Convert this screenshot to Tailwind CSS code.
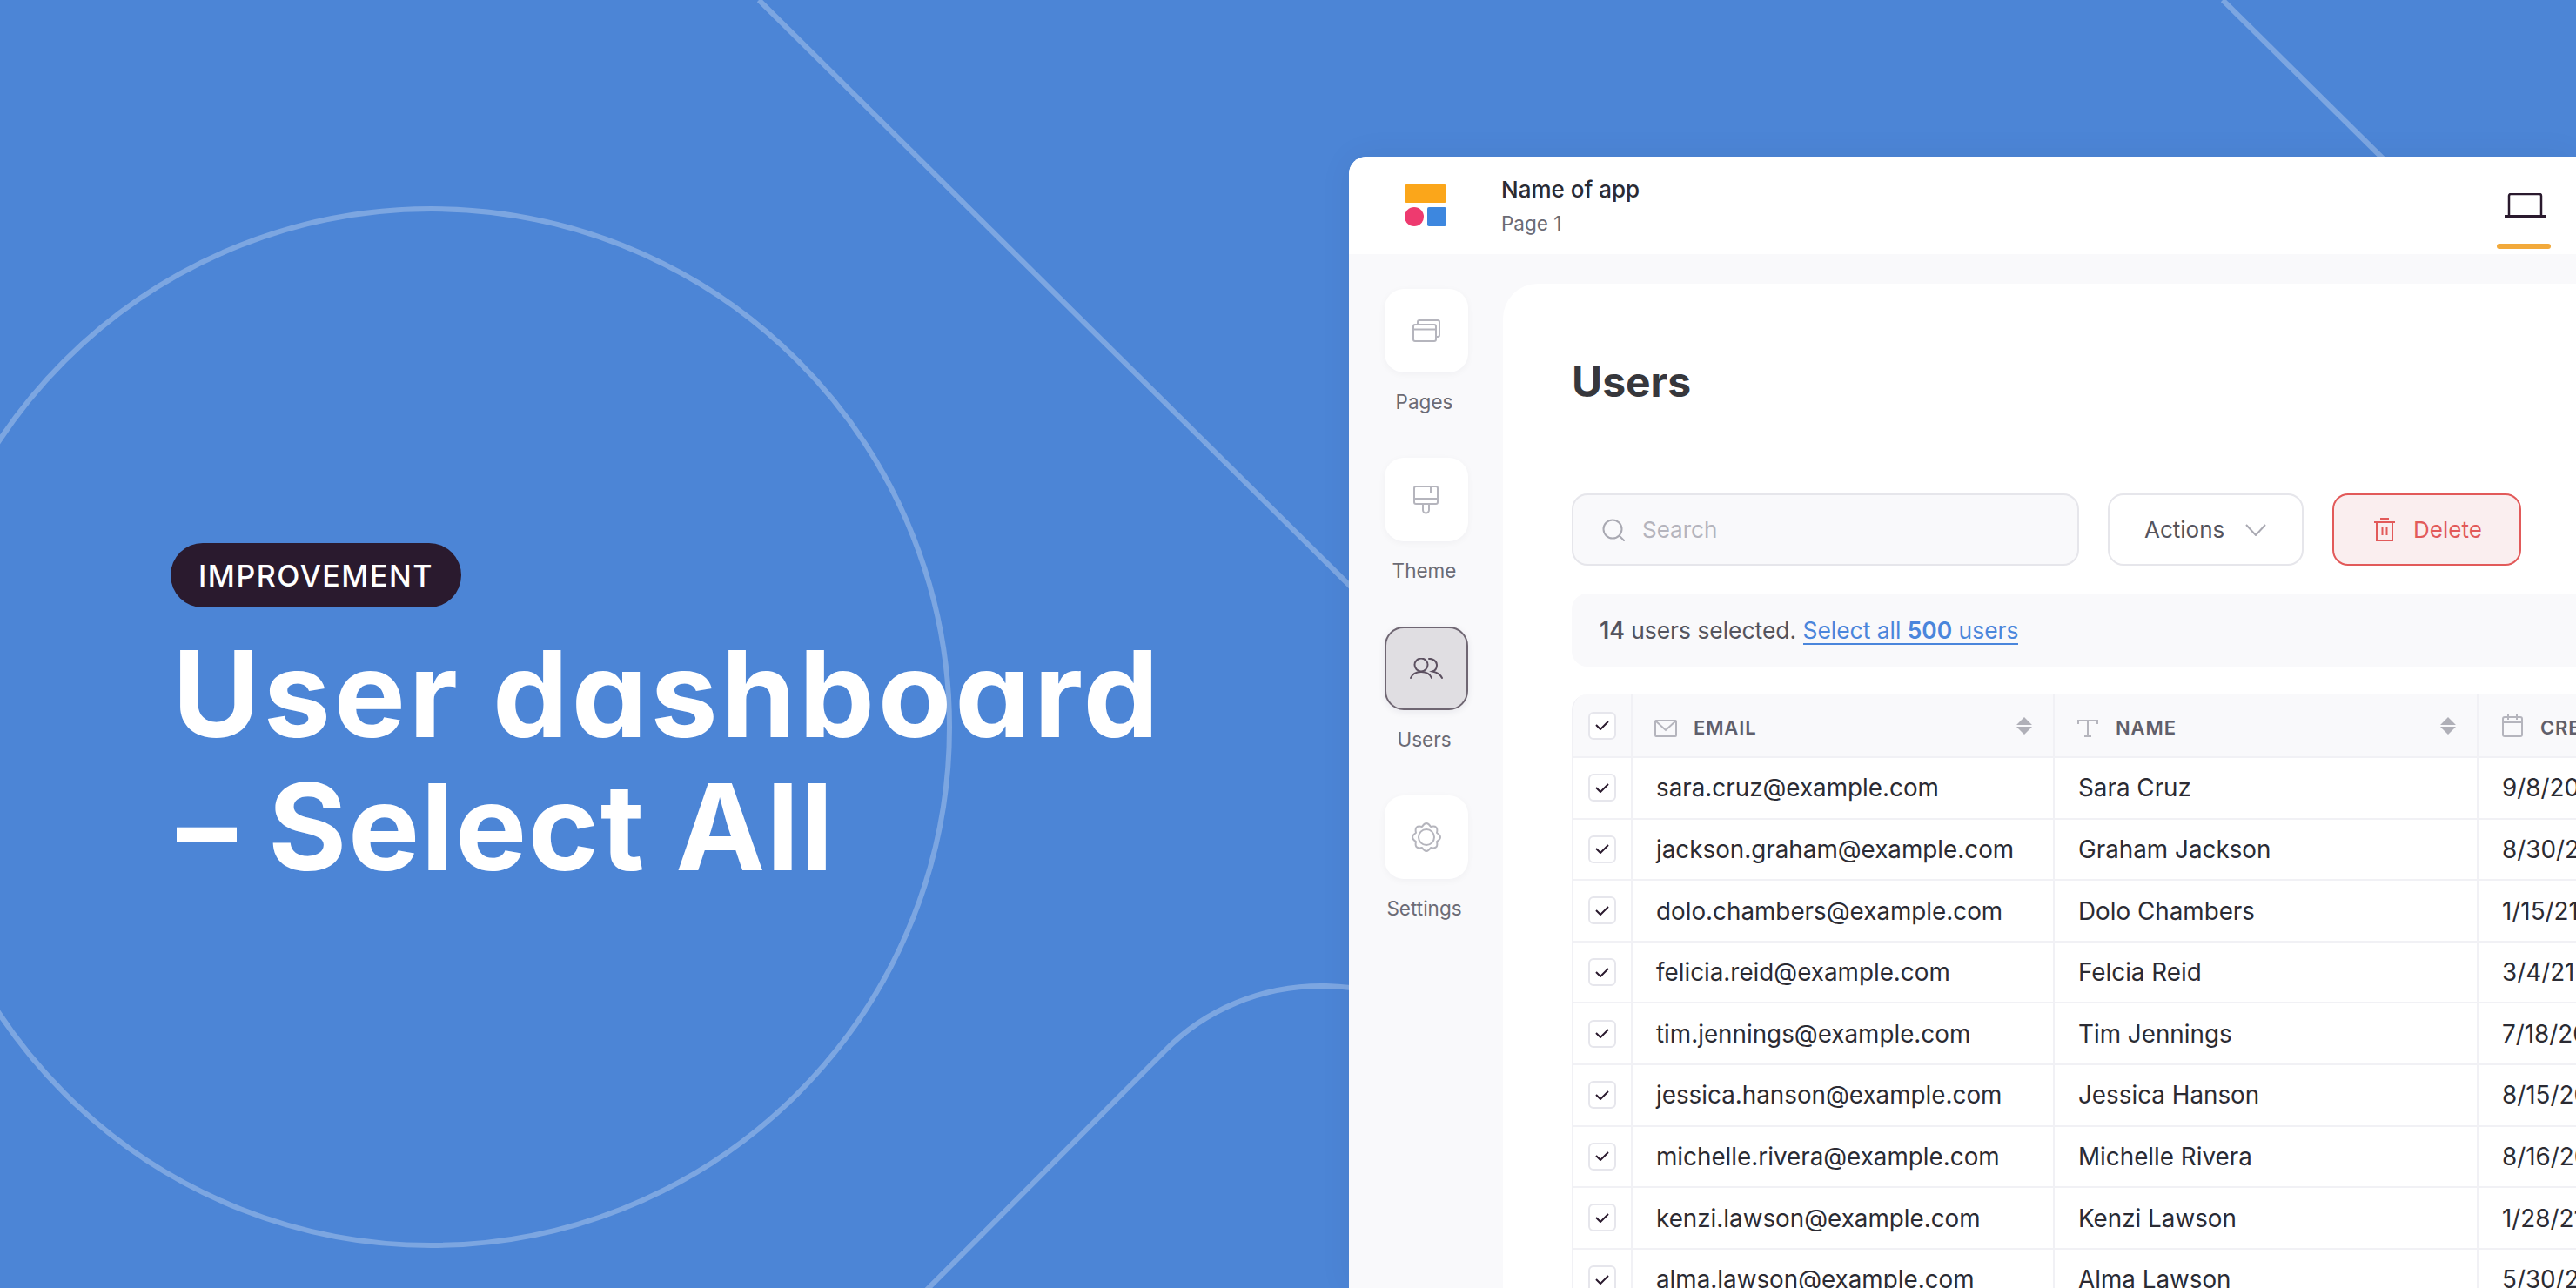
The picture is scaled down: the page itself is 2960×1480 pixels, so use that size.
<!DOCTYPE html>
<html lang="en">
<head>
  <meta charset="UTF-8" />
  <title>User dashboard - Select All</title>
  <script src="https://cdn.jsdelivr.net/npm/@tailwindcss/browser@4"></script>
</head>
<body class="relative flex w-[2960px] h-[1480px] overflow-hidden bg-[#4c85d6] font-['Inter',sans-serif]">

  <!-- background lines -->
  <svg class="absolute inset-0" width="2960" height="1480" fill="none" stroke="#fff" stroke-opacity="0.27" stroke-width="6">
    <circle cx="495.5" cy="835.5" r="595.5" />
    <path d="M872 0 L1552 674" />
    <path d="M2554 0 L2740 184" />
    <path d="M1064 1483 L1339 1207 C1385 1160 1450 1133 1518 1133 Q1535 1133 1552 1135" />
  </svg>

  <!-- left: title -->
  <div class="relative w-[1550px] shrink-0 pl-[196px] pt-[624px]">
    <div class="inline-flex h-[74px] w-[334px] items-center justify-center rounded-full bg-[#2a1a2e] text-[34px] font-medium tracking-[0.045em] text-white">IMPROVEMENT</div>
    <h1 class="mt-[22px] pl-[2px] text-[138px] leading-[153px] font-bold whitespace-nowrap text-white [font-feature-settings:'cv11']">
      <span class="block tracking-[0.027em]">User dashboard</span>
      <span class="ml-[5px] block tracking-[0.012em]">– Select All</span>
    </h1>
  </div>

  <!-- app window -->
  <div class="relative mt-[180px] flex w-[1410px] shrink-0 flex-col overflow-hidden rounded-tl-[20px] bg-[#f9f9fb] shadow-[0_0_40px_rgba(0,0,0,0.05)]">
    <header class="flex h-[112px] shrink-0 items-center bg-white">
      <div class="flex w-[177px] shrink-0 justify-center pr-[1px]">
        <div class="flex w-[48px] flex-col gap-[5px]">
          <div class="h-[21px] rounded-[2px] bg-[#fba61a]"></div>
          <div class="flex justify-between">
            <div class="h-[22px] w-[22px] rounded-full bg-[#ee3a6f]"></div>
            <div class="h-[22px] w-[22px] rounded-[2px] bg-[#3d87df]"></div>
          </div>
        </div>
      </div>
      <div class="ml-[-2px] flex flex-col">
        <span class="text-[26px] leading-[34px] font-medium text-[#2b2b33]">Name of app</span>
        <span class="mt-[8px] text-[22.5px] leading-[28px] text-[#6b6b75]">Page 1</span>
      </div>
      <div class="relative ml-auto mr-[29px] flex h-full w-[62px] justify-center pt-[42px]">
        <svg class="ml-[3px]" width="47" height="28" viewBox="0 0 47 28" fill="none" stroke="#2a1a2e" stroke-width="2.5">
          <path d="M5 27 V3 a2 2 0 0 1 2-2 H40 a2 2 0 0 1 2 2 V27" />
          <path d="M0 26.5 H47" stroke-width="3" />
        </svg>
        <div class="absolute top-[100px] h-[6px] w-[62px] rounded-full bg-[#f2a93b]"></div>
      </div>
    </header>

    <div class="flex min-h-0 flex-1">
      <!-- sidebar -->
      <nav class="flex w-[177px] shrink-0 flex-col items-center gap-[98px] pt-[40px]">
        <div class="relative flex h-[96px] w-[96px] items-center justify-center rounded-[22px] bg-white shadow-[0_2px_8px_rgba(30,30,60,0.04)]">
          <svg width="32" height="26" viewBox="0 0 32 26" fill="none" stroke="#b5b5bd" stroke-width="2">
            <rect x="1" y="6" width="26" height="19" rx="2" />
            <path d="M1 11.5 H27" />
            <path d="M6 6 V3 a2 2 0 0 1 2-2 H29 a2 2 0 0 1 2 2 V18 a2 2 0 0 1-2 2 H27" />
          </svg>
          <span class="absolute top-[116px] -translate-x-[2px] text-[22.5px] leading-[28px] text-[#6b6b75]">Pages</span>
        </div>
        <div class="relative flex h-[96px] w-[96px] items-center justify-center rounded-[22px] bg-white shadow-[0_2px_8px_rgba(30,30,60,0.04)]">
          <svg width="29" height="33" viewBox="0 0 29 33" fill="none" stroke="#b5b5bd" stroke-width="2">
            <path d="M3 1 H26 a2 2 0 0 1 2 2 V19 a2 2 0 0 1-2 2 H3 a2 2 0 0 1-2-2 V3 a2 2 0 0 1 2-2 Z" />
            <path d="M1 15 H28" />
            <path d="M20 1 V8" />
            <path d="M11 21 V28 a3.5 3.5 0 0 0 7 0 V21" />
          </svg>
          <span class="absolute top-[116px] -translate-x-[2px] text-[22.5px] leading-[28px] text-[#6b6b75]">Theme</span>
        </div>
        <div class="relative flex h-[96px] w-[96px] items-center justify-center rounded-[22px] border-2 border-[#6f6672] bg-[#e0dee2] shadow-[0_2px_8px_rgba(30,30,60,0.08)]">
          <svg width="38" height="24" viewBox="0 0 38 24" fill="none" stroke="#5c5060" stroke-width="2" stroke-linecap="round">
            <circle cx="13" cy="8" r="7.5" />
            <path d="M1 23 C3 18 8 16 13 16 C18 16 23 18 25 23" />
            <path d="M22 1 C27 0.5 31 4 31 8.5 C31 12 29 14.5 26 15.5 C31 16.5 35 19 37 23" />
          </svg>
          <span class="absolute top-[114px] -translate-x-[2px] text-[22.5px] leading-[28px] text-[#6b6b75]">Users</span>
        </div>
        <div class="relative flex h-[96px] w-[96px] items-center justify-center rounded-[22px] bg-white shadow-[0_2px_8px_rgba(30,30,60,0.04)]">
          <svg width="34" height="34" viewBox="0 0 34 34" fill="none" stroke="#b5b5bd" stroke-width="2" stroke-linejoin="round">
            <path d="M29 22 Q31.1 31.1 22 29 Q17 37 12 29 Q2.9 31.1 5 22 Q-3 17 5 12 Q2.9 2.9 12 5 Q17 -3 22 5 Q31.1 2.9 29 12 Q37 17 29 22 Z" />
            <circle cx="17" cy="17" r="9" />
          </svg>
          <span class="absolute top-[116px] -translate-x-[2px] text-[22.5px] leading-[28px] text-[#6b6b75]">Settings</span>
        </div>
      </nav>

      <!-- main -->
      <main class="mt-[34px] flex min-w-0 flex-1 flex-col rounded-tl-[40px] bg-white pl-[79px] pt-[87px]">
        <h2 class="h-[50px] shrink-0 text-[48px] leading-[52px] font-bold text-[#36373c]">Users</h2>

        <div class="mt-[104px] flex h-[83px] shrink-0 items-stretch gap-[33px]">
          <div class="flex w-[583px] items-center rounded-[18px] border-2 border-[#e6e6eb] bg-[#f9f9fb] pl-[33px]">
            <svg width="26" height="26" viewBox="0 0 26 26" fill="none" stroke="#a9a9b2" stroke-width="2" stroke-linecap="round">
              <circle cx="12" cy="12" r="10.5" />
              <path d="M20 20 L25 25" />
            </svg>
            <span class="ml-[20px] text-[26px] text-[#b4b4bd]">Search</span>
          </div>
          <div class="flex w-[225px] items-center rounded-[18px] border-2 border-[#e6e6eb] bg-white pl-[40px]">
            <span class="text-[26px] text-[#54545e]">Actions</span>
            <svg class="ml-[24px]" width="24" height="14" viewBox="0 0 24 14" fill="none" stroke="#a9a9b2" stroke-width="2">
              <path d="M1 1 L12 13 L23 1" />
            </svg>
          </div>
          <div class="flex w-[217px] items-center rounded-[18px] border-2 border-[#e25a5a] bg-[#faeeef] pl-[46px]">
            <svg width="24" height="27" viewBox="0 0 24 27" fill="none" stroke="#e25a5a" stroke-width="2">
              <path d="M0 5 H24" />
              <path d="M7 1 H17" />
              <path d="M3 5 V26 H21 V5" />
              <path d="M9.5 10 V20 M14.5 10 V20" />
            </svg>
            <span class="ml-[21px] text-[26px] text-[#e25a5a]">Delete</span>
          </div>
        </div>

        <div class="mt-[32px] flex h-[84px] shrink-0 items-center rounded-l-[18px] bg-[#f9f9fb] pl-[32px] pt-[2px] text-[26.4px] text-[#54545e]">
          <b class="font-semibold">14</b>&nbsp;users selected.&nbsp;<a class="border-b-2 border-[#4a86dc] leading-[30px] text-[#4a86dc]">Select all <b class="font-semibold">500</b> users</a>
        </div>

        <!-- table -->
        <div class="mt-[32px] flex min-w-[1400px] shrink-0 flex-col overflow-hidden rounded-tl-[18px] border-l-2 border-[#f1f1f5] text-[27.8px] text-[#2b2b33]">
          <div class="flex h-[73px] shrink-0 border-b-2 border-[#f1f1f5] bg-[#f9f9fb] text-[22px] font-semibold tracking-[0.04em] text-[#5f5f6b]">
            <div class="flex w-[68px] shrink-0 items-center justify-center border-r-2 border-[#f1f1f5]">
              <span class="flex h-[32px] w-[32px] items-center justify-center rounded-[6px] border-2 border-[#e6e6ec] bg-white"><svg width="16" height="11" viewBox="0 0 16 11" fill="none" stroke="#2a1a2e" stroke-width="2"><path d="M1 5 L6 10 L15 1" /></svg></span>
            </div>
            <div class="flex w-[485px] shrink-0 items-center border-r-2 border-[#f1f1f5] pl-[25px] pr-[24px]">
              <svg class="translate-y-[3px]" width="26" height="20" viewBox="0 0 26 20" fill="none" stroke="#b5b5bd" stroke-width="2"><rect x="1" y="1" width="24" height="18" rx="1" /><path d="M1 1 L13 12 L25 1" /></svg>
              <span class="ml-[19px] translate-y-[3px]">EMAIL</span>
              <svg class="ml-auto" width="18" height="20" viewBox="0 0 18 20" fill="#b0b0b8"><path d="M9 0 L18 9 H0 Z M0 11 H18 L9 20 Z" /></svg>
            </div>
            <div class="flex w-[487px] shrink-0 items-center border-r-2 border-[#f1f1f5] pl-[26px] pr-[24px]">
              <svg class="translate-y-[3px]" width="24" height="20" viewBox="0 0 24 20" fill="none" stroke="#b5b5bd" stroke-width="2"><path d="M1 5 V1 H23 V5 M12 1 V19 M8 19 H16" /></svg>
              <span class="ml-[20px] translate-y-[3px]">NAME</span>
              <svg class="ml-auto" width="18" height="20" viewBox="0 0 18 20" fill="#b0b0b8"><path d="M9 0 L18 9 H0 Z M0 11 H18 L9 20 Z" /></svg>
            </div>
            <div class="flex flex-1 items-center pl-[27px]">
              <svg width="24" height="26" viewBox="0 0 24 26" fill="none" stroke="#b5b5bd" stroke-width="2"><rect x="1" y="3" width="22" height="22" rx="2" /><path d="M1 9 H23 M7 0 V6 M17 0 V6" /></svg>
              <span class="ml-[20px] translate-y-[3px] whitespace-nowrap">CREATED</span>
            </div>
          </div>

          <div class="flex h-[70.6px] shrink-0 border-b-2 border-[#f1f1f5]">
            <div class="flex w-[68px] shrink-0 items-center justify-center border-r-2 border-[#f1f1f5]"><span class="flex h-[32px] w-[32px] items-center justify-center rounded-[6px] border-2 border-[#e6e6ec]"><svg width="16" height="11" viewBox="0 0 16 11" fill="none" stroke="#2a1a2e" stroke-width="2"><path d="M1 5 L6 10 L15 1" /></svg></span></div>
            <div class="flex w-[485px] shrink-0 items-center border-r-2 border-[#f1f1f5] pl-[27px] pt-[2px]">sara.cruz@example.com</div>
            <div class="flex w-[487px] shrink-0 items-center border-r-2 border-[#f1f1f5] pl-[27px] pt-[2px]">Sara Cruz</div>
            <div class="flex flex-1 items-center pl-[27px] pt-[2px]">9/8/20</div>
          </div>
          <div class="flex h-[70.6px] shrink-0 border-b-2 border-[#f1f1f5]">
            <div class="flex w-[68px] shrink-0 items-center justify-center border-r-2 border-[#f1f1f5]"><span class="flex h-[32px] w-[32px] items-center justify-center rounded-[6px] border-2 border-[#e6e6ec]"><svg width="16" height="11" viewBox="0 0 16 11" fill="none" stroke="#2a1a2e" stroke-width="2"><path d="M1 5 L6 10 L15 1" /></svg></span></div>
            <div class="flex w-[485px] shrink-0 items-center border-r-2 border-[#f1f1f5] pl-[27px] pt-[2px]">jackson.graham@example.com</div>
            <div class="flex w-[487px] shrink-0 items-center border-r-2 border-[#f1f1f5] pl-[27px] pt-[2px]">Graham Jackson</div>
            <div class="flex flex-1 items-center pl-[27px] pt-[2px]">8/30/20</div>
          </div>
          <div class="flex h-[70.6px] shrink-0 border-b-2 border-[#f1f1f5]">
            <div class="flex w-[68px] shrink-0 items-center justify-center border-r-2 border-[#f1f1f5]"><span class="flex h-[32px] w-[32px] items-center justify-center rounded-[6px] border-2 border-[#e6e6ec]"><svg width="16" height="11" viewBox="0 0 16 11" fill="none" stroke="#2a1a2e" stroke-width="2"><path d="M1 5 L6 10 L15 1" /></svg></span></div>
            <div class="flex w-[485px] shrink-0 items-center border-r-2 border-[#f1f1f5] pl-[27px] pt-[2px]">dolo.chambers@example.com</div>
            <div class="flex w-[487px] shrink-0 items-center border-r-2 border-[#f1f1f5] pl-[27px] pt-[2px]">Dolo Chambers</div>
            <div class="flex flex-1 items-center pl-[27px] pt-[2px]">1/15/21</div>
          </div>
          <div class="flex h-[70.6px] shrink-0 border-b-2 border-[#f1f1f5]">
            <div class="flex w-[68px] shrink-0 items-center justify-center border-r-2 border-[#f1f1f5]"><span class="flex h-[32px] w-[32px] items-center justify-center rounded-[6px] border-2 border-[#e6e6ec]"><svg width="16" height="11" viewBox="0 0 16 11" fill="none" stroke="#2a1a2e" stroke-width="2"><path d="M1 5 L6 10 L15 1" /></svg></span></div>
            <div class="flex w-[485px] shrink-0 items-center border-r-2 border-[#f1f1f5] pl-[27px] pt-[2px]">felicia.reid@example.com</div>
            <div class="flex w-[487px] shrink-0 items-center border-r-2 border-[#f1f1f5] pl-[27px] pt-[2px]">Felcia Reid</div>
            <div class="flex flex-1 items-center pl-[27px] pt-[2px]">3/4/21</div>
          </div>
          <div class="flex h-[70.6px] shrink-0 border-b-2 border-[#f1f1f5]">
            <div class="flex w-[68px] shrink-0 items-center justify-center border-r-2 border-[#f1f1f5]"><span class="flex h-[32px] w-[32px] items-center justify-center rounded-[6px] border-2 border-[#e6e6ec]"><svg width="16" height="11" viewBox="0 0 16 11" fill="none" stroke="#2a1a2e" stroke-width="2"><path d="M1 5 L6 10 L15 1" /></svg></span></div>
            <div class="flex w-[485px] shrink-0 items-center border-r-2 border-[#f1f1f5] pl-[27px] pt-[2px]">tim.jennings@example.com</div>
            <div class="flex w-[487px] shrink-0 items-center border-r-2 border-[#f1f1f5] pl-[27px] pt-[2px]">Tim Jennings</div>
            <div class="flex flex-1 items-center pl-[27px] pt-[2px]">7/18/20</div>
          </div>
          <div class="flex h-[70.6px] shrink-0 border-b-2 border-[#f1f1f5]">
            <div class="flex w-[68px] shrink-0 items-center justify-center border-r-2 border-[#f1f1f5]"><span class="flex h-[32px] w-[32px] items-center justify-center rounded-[6px] border-2 border-[#e6e6ec]"><svg width="16" height="11" viewBox="0 0 16 11" fill="none" stroke="#2a1a2e" stroke-width="2"><path d="M1 5 L6 10 L15 1" /></svg></span></div>
            <div class="flex w-[485px] shrink-0 items-center border-r-2 border-[#f1f1f5] pl-[27px] pt-[2px]">jessica.hanson@example.com</div>
            <div class="flex w-[487px] shrink-0 items-center border-r-2 border-[#f1f1f5] pl-[27px] pt-[2px]">Jessica Hanson</div>
            <div class="flex flex-1 items-center pl-[27px] pt-[2px]">8/15/20</div>
          </div>
          <div class="flex h-[70.6px] shrink-0 border-b-2 border-[#f1f1f5]">
            <div class="flex w-[68px] shrink-0 items-center justify-center border-r-2 border-[#f1f1f5]"><span class="flex h-[32px] w-[32px] items-center justify-center rounded-[6px] border-2 border-[#e6e6ec]"><svg width="16" height="11" viewBox="0 0 16 11" fill="none" stroke="#2a1a2e" stroke-width="2"><path d="M1 5 L6 10 L15 1" /></svg></span></div>
            <div class="flex w-[485px] shrink-0 items-center border-r-2 border-[#f1f1f5] pl-[27px] pt-[2px]">michelle.rivera@example.com</div>
            <div class="flex w-[487px] shrink-0 items-center border-r-2 border-[#f1f1f5] pl-[27px] pt-[2px]">Michelle Rivera</div>
            <div class="flex flex-1 items-center pl-[27px] pt-[2px]">8/16/20</div>
          </div>
          <div class="flex h-[70.6px] shrink-0 border-b-2 border-[#f1f1f5]">
            <div class="flex w-[68px] shrink-0 items-center justify-center border-r-2 border-[#f1f1f5]"><span class="flex h-[32px] w-[32px] items-center justify-center rounded-[6px] border-2 border-[#e6e6ec]"><svg width="16" height="11" viewBox="0 0 16 11" fill="none" stroke="#2a1a2e" stroke-width="2"><path d="M1 5 L6 10 L15 1" /></svg></span></div>
            <div class="flex w-[485px] shrink-0 items-center border-r-2 border-[#f1f1f5] pl-[27px] pt-[2px]">kenzi.lawson@example.com</div>
            <div class="flex w-[487px] shrink-0 items-center border-r-2 border-[#f1f1f5] pl-[27px] pt-[2px]">Kenzi Lawson</div>
            <div class="flex flex-1 items-center pl-[27px] pt-[2px]">1/28/21</div>
          </div>
          <div class="flex h-[70.6px] shrink-0 border-b-2 border-[#f1f1f5]">
            <div class="flex w-[68px] shrink-0 items-center justify-center border-r-2 border-[#f1f1f5]"><span class="flex h-[32px] w-[32px] items-center justify-center rounded-[6px] border-2 border-[#e6e6ec]"><svg width="16" height="11" viewBox="0 0 16 11" fill="none" stroke="#2a1a2e" stroke-width="2"><path d="M1 5 L6 10 L15 1" /></svg></span></div>
            <div class="flex w-[485px] shrink-0 items-center border-r-2 border-[#f1f1f5] pl-[27px] pt-[2px]">alma.lawson@example.com</div>
            <div class="flex w-[487px] shrink-0 items-center border-r-2 border-[#f1f1f5] pl-[27px] pt-[2px]">Alma Lawson</div>
            <div class="flex flex-1 items-center pl-[27px] pt-[2px]">5/30/20</div>
          </div>
        </div>
      </main>
    </div>
  </div>
</body>
</html>
